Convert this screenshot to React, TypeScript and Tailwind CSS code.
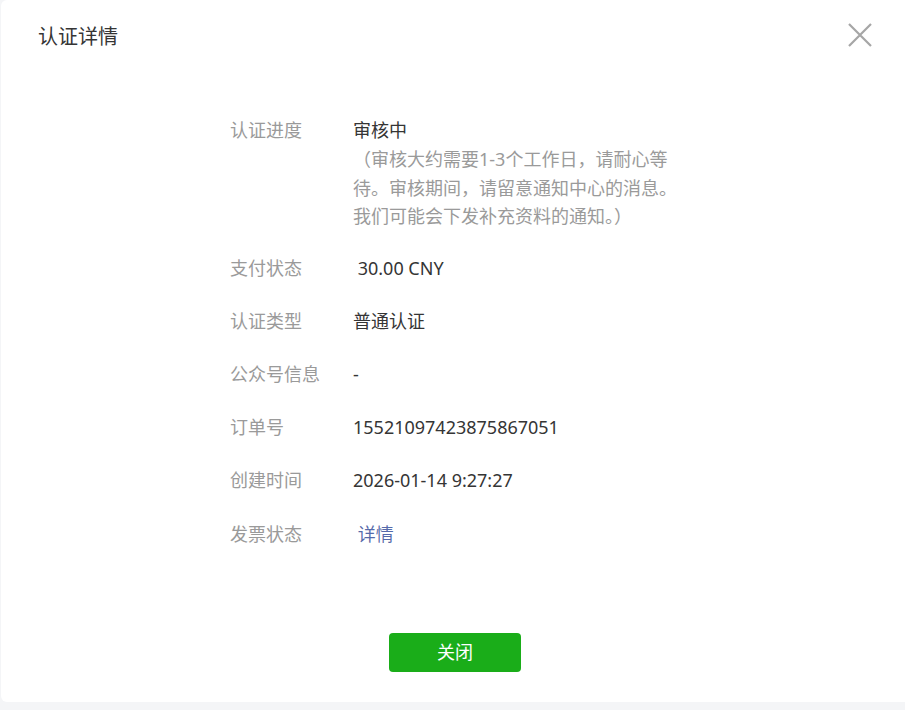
import React from "react";

type Row = { label: string; value: string; cls: string };

const rows: Row[] = [
  { label: "支付状态", value: " 30.00 CNY", cls: "text-[#353535]" },
  { label: "认证类型", value: "普通认证", cls: "text-[#353535]" },
  { label: "公众号信息", value: "-", cls: "text-[#353535]" },
  { label: "订单号", value: "15521097423875867051", cls: "text-[#353535]" },
  { label: "创建时间", value: "2026-01-14 9:27:27", cls: "text-[#353535]" },
  { label: "发票状态", value: " 详情", cls: "text-blue-900/75 cursor-pointer" },
];

export default function App() {
  return (
    <div
      className="w-[905px] h-[710px] overflow-hidden bg-[#f4f5f7]"
      style={{ fontFamily: '"Noto Sans", "Noto Sans CJK SC", sans-serif' }}
    >
      <div className="ml-[1px] w-[916px] h-[702px] bg-white rounded-[6px] flex flex-col">
        {/* header */}
        <div className="flex items-start justify-between pl-[37px] pr-[45px] pt-[23px]">
          <h2 className="text-[20px] leading-[28px] text-[#353535] font-normal">认证详情</h2>
          <button className="w-[24px] h-[24px] text-[#a6a6a6]" aria-label="close">
            <svg viewBox="0 0 24 24" width="24" height="24" fill="none" stroke="currentColor" strokeWidth="2.2">
              <path d="M1 1 L23 23 M23 1 L1 23" />
            </svg>
          </button>
        </div>

        {/* body */}
        <div className="pl-[229px] pt-[65px] text-[18px] leading-[28.8px]">
          <div className="flex">
            <div className="w-[123px] shrink-0 text-[#9a9a9a]">认证进度</div>
            <div>
              <div className="text-[#353535]">审核中</div>
              <div className="text-[#9a9a9a]">
                <div>（审核大约需要1-3个工作日，请耐心等</div>
                <div>待。审核期间，请留意通知中心的消息。</div>
                <div>我们可能会下发补充资料的通知。）</div>
              </div>
            </div>
          </div>
          <div className="flex flex-col gap-[24.4px] mt-[22.4px]">
            {rows.map((r) => (
              <div key={r.label} className="flex">
                <div className="w-[123px] shrink-0 text-[#9a9a9a]">{r.label}</div>
                <div className={"whitespace-pre " + r.cls}>{r.value}</div>
              </div>
            ))}
          </div>
        </div>

        {/* footer */}
        <div className="flex pl-[388px] mt-[85px]">
          <button className="w-[132px] h-[39px] rounded-[4px] bg-[#1aad19] text-white text-[18px] leading-[39px]">
            关闭
          </button>
        </div>
      </div>
    </div>
  );
}
